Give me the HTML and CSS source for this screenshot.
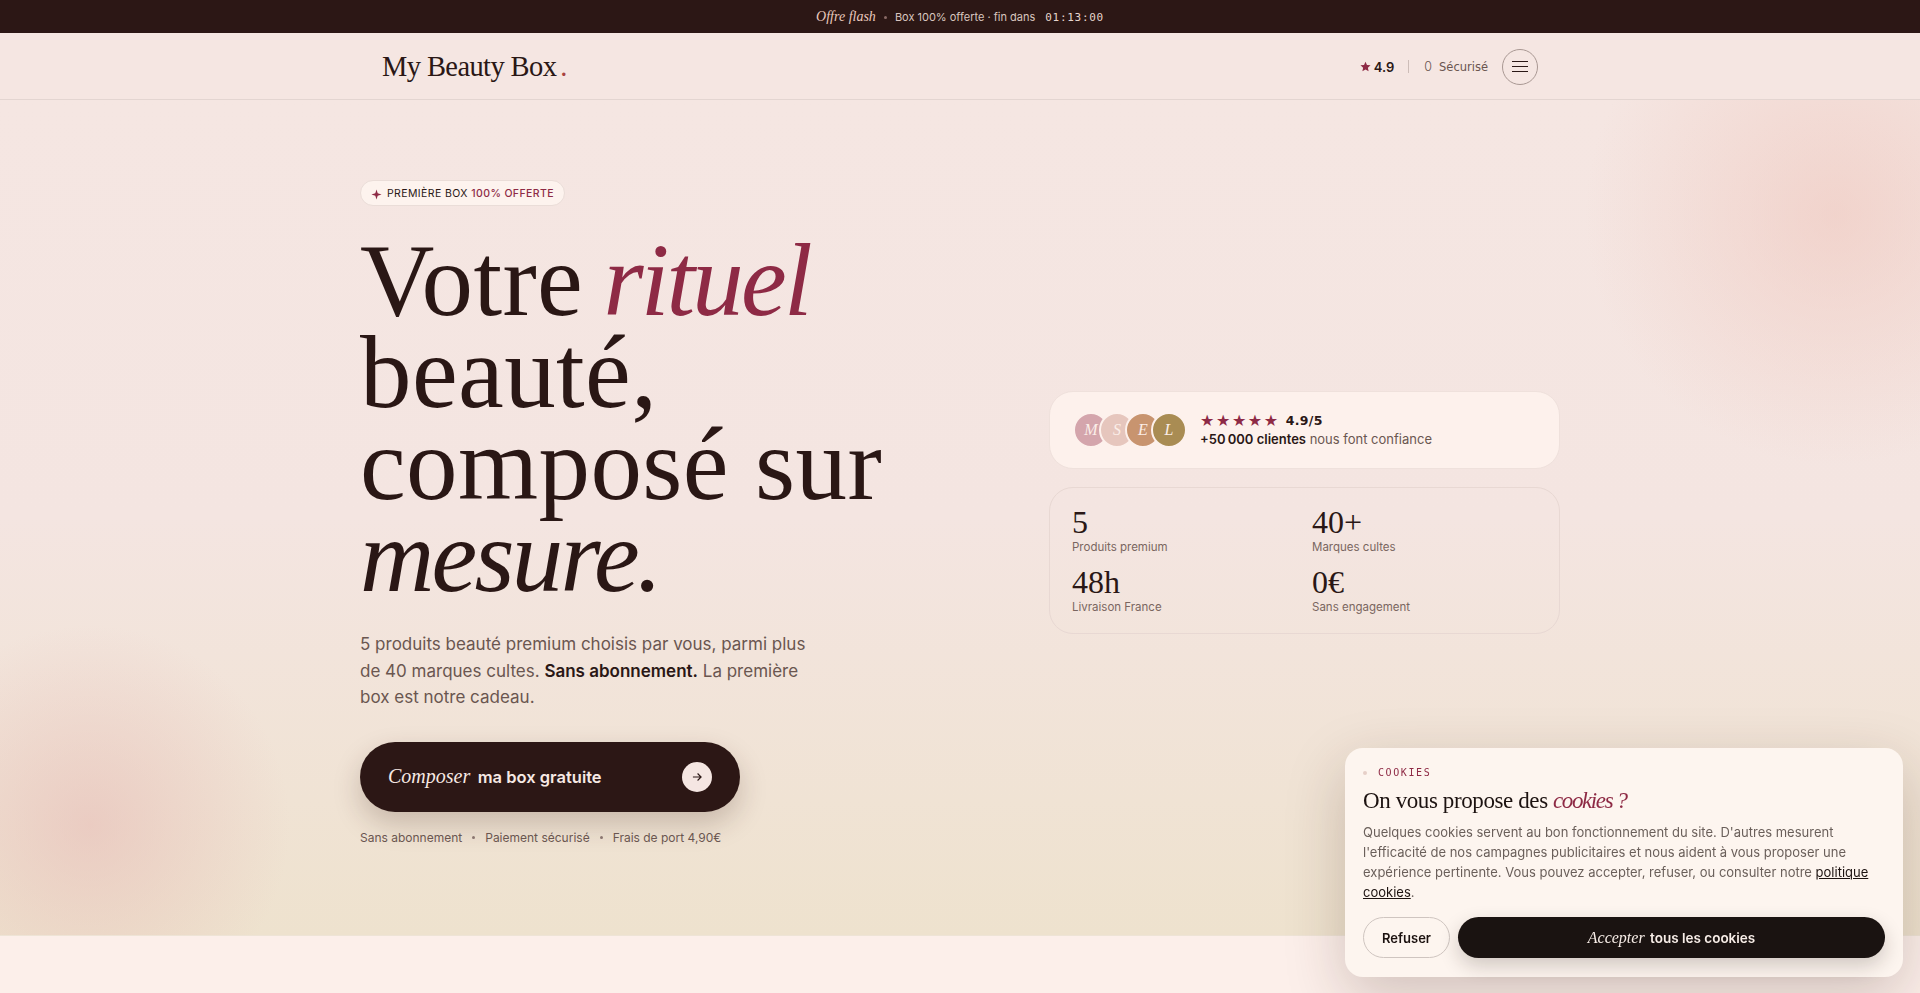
FILE: index.html
```html
<!DOCTYPE html>
<html lang="fr">

<head>
    <meta charset="UTF-8">
    <meta name="viewport" content="width=device-width, initial-scale=1.0">
    <title>My Beauty Box</title>
    <link rel="stylesheet" href="styles.css">
</head>

<body>
    <!-- Bandeau offre -->
    <div class="flash-bar">
        <em class="flash-title">Offre flash</em>
        <span class="flash-dot"></span>
        <span>Box 100% offerte · fin dans</span>
        <span class="flash-time">01:13:00</span>
    </div>

    <header class="site-header">
        <div class="header-inner">
            <a class="logo">My Beauty Box<span class="logo-dot">.</span></a>
            <div class="header-right">
                <span class="header-rating"><svg class="star-small" viewBox="0 0 24 24"><path d="M12 1.5l3.2 7.1 7.8.8-5.8 5.2 1.6 7.7L12 18.4l-6.8 3.9 1.6-7.7L1 9.4l7.8-.8z"/></svg>4.9</span>
                <span class="header-sep"></span>
                <span class="header-secure"><span class="secure-icon">0</span>Sécurisé</span>
                <button class="menu-button" aria-label="Menu">
                    <span></span><span></span><span></span>
                </button>
            </div>
        </div>
    </header>

    <section class="hero">
        <div class="hero-inner">
            <div class="hero-left">
                <div class="badge">
                    <svg class="badge-icon" viewBox="0 0 12 12"><path d="M6 0.5 L7.3 4.7 L11.5 6 L7.3 7.3 L6 11.5 L4.7 7.3 L0.5 6 L4.7 4.7 Z"/></svg>
                    <span>PREMIÈRE BOX <strong>100% OFFERTE</strong></span>
                </div>
                <h1 class="hero-title">Votre <em class="accent">rituel</em><br>beauté,<br>composé sur<br><em>mesure.</em></h1>
                <p class="hero-text">5 produits beauté premium choisis par vous, parmi plus de 40 marques cultes. <strong>Sans abonnement.</strong> La première box est notre cadeau.</p>
                <a class="cta">
                    <span class="cta-label"><em>Composer</em> <strong>ma box gratuite</strong></span>
                    <span class="cta-arrow">
                        <svg viewBox="0 0 24 24"><path d="M5 12h14M13 6l6 6-6 6"/></svg>
                    </span>
                </a>
                <div class="reassure">
                    <span>Sans abonnement</span><i></i><span>Paiement sécurisé</span><i></i><span>Frais de port 4,90€</span>
                </div>
            </div>

            <div class="hero-right">
                <div class="proof-card">
                    <div class="avatars">
                        <span class="avatar a1">M</span>
                        <span class="avatar a2">S</span>
                        <span class="avatar a3">E</span>
                        <span class="avatar a4">L</span>
                    </div>
                    <div class="proof-text">
                        <div class="proof-stars"><span class="stars">★★★★★</span><b>4.9/5</b></div>
                        <div class="proof-line"><strong>+50&#8239;000 clientes</strong> nous font confiance</div>
                    </div>
                </div>
                <div class="stats-card">
                    <div class="stat"><div class="stat-num">5</div><div class="stat-label">Produits premium</div></div>
                    <div class="stat"><div class="stat-num">40+</div><div class="stat-label">Marques cultes</div></div>
                    <div class="stat"><div class="stat-num">48h</div><div class="stat-label">Livraison France</div></div>
                    <div class="stat"><div class="stat-num">0€</div><div class="stat-label">Sans engagement</div></div>
                </div>
            </div>
        </div>
    </section>

    <div class="below"></div>

    <!-- Bandeau cookies -->
    <aside class="cookie-box">
        <div class="cookie-eyebrow"><span class="cookie-dot"></span>COOKIES</div>
        <h2 class="cookie-title">On vous propose des <em>cookies ?</em></h2>
        <p class="cookie-text">Quelques cookies servent au bon fonctionnement du site. D'autres mesurent l'efficacité de nos campagnes publicitaires et nous aident à vous proposer une expérience pertinente. Vous pouvez accepter, refuser, ou consulter notre <a>politique cookies</a>.</p>
        <div class="cookie-actions">
            <button class="cookie-refuse">Refuser</button>
            <button class="cookie-accept"><em>Accepter</em> tous les cookies</button>
        </div>
    </aside>
</body>

</html>
```

FILE: styles.css
```css
* {
    box-sizing: border-box;
}

html, body {
    height: 100%;
}

body {
    margin: 0;
    font-family: Inter, "Liberation Sans", sans-serif;
    color: #2a1715;
    background-color: #fcefea;
    overflow: hidden;
}

/* flash bar */
.flash-bar {
    height: 33px;
    padding-top: 1px;
    display: flex;
    align-items: center;
    justify-content: center;
    background-color: #2c1715;
    color: #d9c6bf;
    font-size: 11px;
}

.flash-title {
    font-family: "Liberation Serif", serif;
    font-size: 14px;
    color: #eac9bd;
}

.flash-dot {
    width: 3px;
    height: 3px;
    margin: 0 8px;
    border-radius: 50%;
    background-color: #8a6a66;
}

.flash-time {
    margin-left: 10px;
    font-family: "DejaVu Sans Mono", monospace;
    font-size: 11px;
    letter-spacing: 0.7px;
    color: #e6d5cd;
}

/* header */
.site-header {
    height: 67px;
    background-color: #f5e6e2;
    border-bottom: 1px solid #e3d5d1;
}

.header-inner {
    max-width: 1200px;
    height: 100%;
    margin: 0 auto;
    padding: 0 22px 0 22px;
    display: flex;
    align-items: center;
    justify-content: space-between;
}

.logo {
    padding-top: 2px;
    font-family: "Liberation Serif", serif;
    font-size: 28.5px;
    letter-spacing: -0.6px;
    color: #2a1715;
}

.logo-dot {
    margin-left: 4px;
    color: #a8423f;
}

.header-right {
    padding-top: 1px;
    display: flex;
    align-items: center;
    font-family: "DejaVu Sans", sans-serif;
    font-size: 11.5px;
}

.header-rating {
    display: flex;
    align-items: center;
    gap: 3px;
    font-family: Inter, sans-serif;
    font-size: 13px;
    font-weight: 600;
    color: #2a1715;
}

.star-small {
    width: 11px;
    height: 11px;
    fill: #8e2a45;
}

.header-sep {
    width: 1px;
    height: 13px;
    margin: 0 15px 0 14px;
    background-color: #cdbdb8;
}

.header-secure {
    display: flex;
    align-items: center;
    color: #6a5550;
}

.secure-icon {
    margin-right: 7px;
    font-family: Inter, sans-serif;
    font-size: 12.5px;
    font-weight: 300;
}

.menu-button {
    width: 36px;
    height: 36px;
    margin-left: 14px;
    padding: 0;
    display: flex;
    flex-direction: column;
    align-items: center;
    justify-content: center;
    gap: 3.7px;
    border: 1px solid #a99893;
    border-radius: 50%;
    background: transparent;
}

.menu-button span {
    display: block;
    width: 16px;
    height: 1.3px;
    background-color: #2a1715;
}

/* hero */
.hero {
    height: 836px;
    border-bottom: 1px solid #eee4d6;
    background:
        radial-gradient(circle 250px at 1835px 115px, rgba(238, 196, 186, 0.55), rgba(238, 196, 186, 0) 100%),
        radial-gradient(circle 200px at 90px 725px, rgba(230, 185, 180, 0.55), rgba(230, 185, 180, 0) 100%),
        linear-gradient(180deg, #f5e6e2 0%, #f4e5e1 50%, #eee2ce 100%);
}

.hero-inner {
    max-width: 1200px;
    height: 100%;
    margin: 0 auto;
    padding-bottom: 10px;
    display: grid;
    grid-template-columns: 1fr 511px;
    align-items: center;
}

.hero-right {
    margin-bottom: 1px;
}

.badge {
    display: inline-flex;
    align-items: center;
    gap: 5px;
    height: 26px;
    padding: 0 10px;
    border: 1px solid #eaddd8;
    border-radius: 13px;
    background-color: #fdf3ee;
    font-size: 10.5px;
    font-weight: 400;
    letter-spacing: 0.4px;
}

.badge strong {
    font-weight: 500;
    color: #8e2a45;
}

.badge-icon {
    width: 11px;
    height: 11px;
    margin-top: 2px;
    fill: #8e2a45;
}

.hero-title {
    margin: 28px 0 0;
    font-family: "Liberation Serif", serif;
    font-size: 103px;
    line-height: 92px;
    font-weight: 400;
    letter-spacing: 0.4px;
    color: #2a1715;
}

.hero-title em {
    letter-spacing: -2.8px;
}

.hero-title .accent {
    margin-left: -6px;
    color: #8e2a45;
}

.hero-text {
    width: 460px;
    margin: 29px 0 0;
    font-size: 17px;
    line-height: 26.4px;
    color: #6a5650;
}

.hero-text strong {
    font-weight: 600;
    color: #2a1715;
}

.cta {
    width: 380px;
    height: 70px;
    margin-top: 31px;
    padding: 0 28px;
    display: flex;
    align-items: center;
    justify-content: space-between;
    border-radius: 35px;
    background-color: #2c1715;
    box-shadow: 0 12px 28px rgba(60, 30, 25, 0.22);
    color: #f7e9e4;
}

.cta-label em {
    font-family: "Liberation Serif", serif;
    font-size: 20px;
    margin-right: 3px;
}

.cta-label strong {
    font-size: 16.5px;
    font-weight: 600;
}

.cta-arrow {
    width: 30px;
    height: 30px;
    display: flex;
    align-items: center;
    justify-content: center;
    border-radius: 50%;
    background-color: #f5e6e2;
}

.cta-arrow svg {
    width: 14px;
    height: 14px;
    fill: none;
    stroke: #2a1715;
    stroke-width: 2;
}

.reassure {
    margin-top: 18px;
    display: flex;
    align-items: center;
    font-size: 12px;
    color: #6a5650;
}

.reassure i {
    width: 3px;
    height: 3px;
    margin: 0 10px;
    border-radius: 50%;
    background-color: #8a7670;
}

/* right cards */
.proof-card {
    height: 78px;
    padding: 0 21px 0 23px;
    display: flex;
    align-items: center;
    gap: 13px;
    border: 1px solid #efe1dc;
    border-radius: 24px;
    background-color: #fdf1ec;
}

.avatars {
    display: flex;
}

.avatar {
    width: 36px;
    height: 36px;
    margin-left: -10px;
    display: flex;
    align-items: center;
    justify-content: center;
    border: 2px solid #fdf1ec;
    border-radius: 50%;
    font-family: "Liberation Serif", serif;
    font-style: italic;
    font-size: 16px;
    color: #fbeee8;
}

.avatar:first-child {
    margin-left: 0;
}

.a1 { background-color: #d4a5ac; }
.a2 { background-color: #e6c6bd; }
.a3 { background-color: #c8946f; }
.a4 { background-color: #a98c53; }

.proof-stars {
    font-family: "DejaVu Sans", sans-serif;
    font-size: 12.5px;
    line-height: 18px;
}

.stars {
    color: #8e2a45;
    font-size: 16px;
    letter-spacing: 1.6px;
    margin-right: 6px;
    vertical-align: -1px;
}

.proof-stars b {
    letter-spacing: 0.3px;
}

.proof-line {
    font-size: 13px;
    line-height: 18px;
    color: #6a5650;
}

.proof-line strong {
    font-weight: 600;
    color: #2a1715;
}

.stats-card {
    height: 147px;
    margin-top: 18px;
    padding: 19px 22px;
    display: grid;
    grid-template-columns: 240px 1fr;
    grid-auto-rows: 60px;
    border: 1px solid #e8d8d3;
    border-radius: 24px;
}

.stat-num {
    font-family: "Liberation Serif", serif;
    font-size: 32px;
    line-height: 30px;
    color: #2a1715;
}

.stat-label {
    margin-top: 2px;
    font-size: 11.5px;
    line-height: 16px;
    color: #7a6660;
}

/* cookies */
.cookie-box {
    position: fixed;
    left: 1345px;
    top: 748px;
    width: 558px;
    height: 229px;
    padding: 18px 18px 0;
    border-radius: 18px;
    background-color: #fdf5ef;
    box-shadow: 0 20px 60px rgba(60, 30, 25, 0.22);
}

.cookie-eyebrow {
    display: flex;
    align-items: center;
    font-family: "DejaVu Sans Mono", monospace;
    font-size: 10px;
    letter-spacing: 1.6px;
    line-height: 14px;
    color: #8e2a45;
}

.cookie-dot {
    width: 4px;
    height: 4px;
    margin-right: 11px;
    border-radius: 50%;
    background-color: #e6cfc8;
}

.cookie-title {
    margin: 6px 0 0;
    font-family: "Liberation Serif", serif;
    font-size: 23px;
    line-height: 30px;
    font-weight: 400;
    letter-spacing: -0.4px;
    color: #1c1210;
}

.cookie-title em {
    letter-spacing: -1.4px;
    color: #8e2a45;
}

.cookie-text {
    margin: 6px 0 0;
    font-size: 13px;
    line-height: 20px;
    color: #6a5f5a;
}

.cookie-text a {
    color: #1c1210;
    text-decoration: underline;
}

.cookie-actions {
    margin-top: 15px;
    display: flex;
    gap: 8px;
}

.cookie-refuse {
    width: 87px;
    height: 41px;
    border: 1px solid #cfc5c0;
    border-radius: 21px;
    background: transparent;
    font-family: Inter, sans-serif;
    font-size: 13px;
    font-weight: 600;
    color: #1c1210;
}

.cookie-accept {
    flex: 1;
    height: 41px;
    border: none;
    border-radius: 21px;
    background-color: #1a1311;
    box-shadow: 0 8px 20px rgba(30, 20, 15, 0.2);
    font-family: Inter, sans-serif;
    font-size: 13.5px;
    font-weight: 600;
    color: #f7ede7;
}

.cookie-accept em {
    font-family: "Liberation Serif", serif;
    font-size: 16px;
    font-weight: 400;
    margin-right: 2px;
}
```
